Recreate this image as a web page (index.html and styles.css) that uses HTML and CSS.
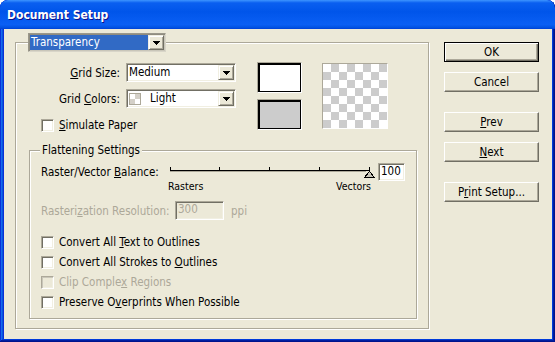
FILE: index.html
```html
<!DOCTYPE html>
<html lang="en">
<head>
  <meta charset="UTF-8">
  <title>Document Setup</title>
  <link rel="stylesheet" href="styles.css">
</head>
<body>
  <div class="window">
    <div class="titlebar">
      <span class="title">Document Setup</span>
    </div>
    <div class="client">
      <div class="panel">
        <div class="combo combo-legend">
          <span class="combo-value">Transparency</span>
          <span class="combo-btn"><svg width="7" height="4" viewBox="0 0 7 4"><polygon points="0,0 7,0 3.5,4" fill="#000"/></svg></span>
        </div>

        <div class="top">
          <div class="grid-form">
            <div class="field">
              <span class="field-label"><u>G</u>rid Size:</span>
              <div class="combo">
                <span class="combo-value">Medium</span>
                <span class="combo-btn"><svg width="7" height="4" viewBox="0 0 7 4"><polygon points="0,0 7,0 3.5,4" fill="#000"/></svg></span>
              </div>
            </div>
            <div class="field">
              <span class="field-label">Grid <u>C</u>olors:</span>
              <div class="combo">
                <span class="combo-value"><i class="grid-icon"></i>Light</span>
                <span class="combo-btn"><svg width="7" height="4" viewBox="0 0 7 4"><polygon points="0,0 7,0 3.5,4" fill="#000"/></svg></span>
              </div>
            </div>
            <div class="check check-paper"><span class="box"></span><span><u>S</u>imulate Paper</span></div>
          </div>
          <div class="swatches">
            <div class="swatch swatch-white"></div>
            <div class="swatch swatch-gray"></div>
          </div>
          <div class="checker"></div>
        </div>

        <div class="group">
          <div class="group-title">Flattening Settings</div>

          <div class="balance">
            <span class="balance-label">Raster/Vector <u>B</u>alance:</span>
            <svg class="slider" width="208" height="18" viewBox="0 0 208 18">
              <rect x="2" y="7" width="200" height="1" fill="#000"/>
              <rect x="2" y="8" width="196" height="1" fill="#ACA899"/>
              <rect x="2" y="4" width="1" height="3" fill="#000"/>
              <rect x="51" y="4" width="1" height="3" fill="#000"/>
              <rect x="101" y="4" width="1" height="3" fill="#000"/>
              <rect x="151" y="4" width="1" height="3" fill="#000"/>
              <rect x="201" y="4" width="1" height="3" fill="#000"/>
              <polygon points="201.5,8.5 196.5,14.5 206.5,14.5" fill="#C8C5B8" stroke="#000" stroke-width="1"/>
            </svg>
            <span class="input input-value">100</span>
          </div>
          <div class="scale">
            <span>Rasters</span>
            <span>Vectors</span>
          </div>

          <div class="res disabled">
            <span class="res-label">Rasteri<u>z</u>ation Resolution:</span>
            <span class="input input-disabled">300</span>
            <span class="res-unit">ppi</span>
          </div>

          <div class="checks">
            <div class="check"><span class="box"></span><span>Convert All <u>T</u>ext to Outlines</span></div>
            <div class="check"><span class="box"></span><span>Convert All Strokes to <u>O</u>utlines</span></div>
            <div class="check disabled"><span class="box"></span><span>Clip Comple<u>x</u> Regions</span></div>
            <div class="check"><span class="box"></span><span>Preserve O<u>v</u>erprints When Possible</span></div>
          </div>
        </div>
      </div>

      <div class="buttons">
        <button class="btn btn-default">OK</button>
        <button class="btn">Cancel</button>
        <button class="btn btn-space"><u>P</u>rev</button>
        <button class="btn"><u>N</u>ext</button>
        <button class="btn btn-space">P<u>r</u>int Setup...</button>
      </div>
    </div>
  </div>
</body>
</html>
```

FILE: styles.css
```css
body {
  margin: 0;
  background: #fff;
  font-family: "DejaVu Sans Condensed", "Liberation Sans", sans-serif;
  font-size: 11.5px;
  line-height: 14px;
  color: #000;
}

u {
  text-underline-offset: 1px;
}

.window {
  width: 555px;
  height: 342px;
  box-sizing: border-box;
  display: flex;
  flex-direction: column;
  background: #0831d9;
  border-radius: 8px 8px 0 0;
  box-shadow: inset -1px -1px #00138c, inset 1px 1px #0831d9, inset -2px -2px #001ea0, inset 2px 2px #166aee, inset -3px -3px #003bda, inset 3px 3px #0855dd;
  overflow: hidden;
}

.titlebar {
  height: 29px;
  flex-shrink: 0;
  background: linear-gradient(180deg, #3d95ff, #0a5ff0 10%, #0055ea 40%, #0a5ff4 85%, #0050e0 96%, #003dd7);
  border-radius: 8px 8px 0 0;
}

.title {
  display: block;
  padding-left: 7px;
  line-height: 30px;
  color: #fff;
  font-weight: bold;
  font-size: 12px;
  text-shadow: 1px 1px #0f1089;
}

.client {
  flex: 1;
  display: flex;
  align-items: flex-start;
  margin: 0 3px 3px 4px;
  padding: 13px 0 0 11px;
  background: #ece9d8;
}

/* etched group boxes */
.panel {
  width: 414px;
  height: 287px;
  box-sizing: border-box;
  border: 1px solid #aca899;
  box-shadow: 1px 1px 0 #fff, inset 1px 1px 0 #fff;
}

.combo {
  display: flex;
  height: 19px;
  box-sizing: border-box;
  padding: 1px;
  background: #fff;
  border: 1px solid;
  border-color: #aca899 #fff #fff #aca899;
  box-shadow: inset 1px 1px #716f64, inset -1px -1px #f1efe2;
}

.combo-value {
  flex: 1;
  display: flex;
  align-items: center;
  padding-left: 1px;
  line-height: 15px;
  white-space: nowrap;
}

.combo-btn {
  width: 16px;
  height: 15px;
  box-sizing: border-box;
  display: flex;
  align-items: center;
  justify-content: center;
  background: #ece9d8;
  border: 1px solid;
  border-color: #f1efe2 #716f64 #716f64 #f1efe2;
  box-shadow: inset 1px 1px #fff, inset -1px -1px #aca899;
}

.combo-btn svg {
  display: block;
  shape-rendering: crispEdges;
}

.combo-legend {
  width: 138px;
  margin: -10px 0 0 12px;
  background: #ece9d8;
  border-color: #9a978a #d8d5c8 #d8d5c8 #9a978a;
  box-shadow: inset 1px 1px #8f8c80, inset -1px -1px #c9c6b9;
}

.combo-legend .combo-value {
  background: #316ac5;
  color: #fff;
}

.top {
  display: flex;
  align-items: flex-start;
  margin-top: 10px;
}

.grid-form {
  width: 220px;
}

.field {
  display: flex;
  align-items: center;
  margin-top: 1px;
}

.field + .field {
  margin-top: 7px;
}

.field-label {
  width: 104px;
  margin-right: 6px;
  text-align: right;
  white-space: nowrap;
}

.field .combo {
  width: 110px;
}

.grid-icon {
  width: 12px;
  height: 12px;
  box-sizing: border-box;
  margin: 0 9px 0 0;
  border: 1px solid #aca899;
  background: repeating-conic-gradient(#d4d0c8 0 25%, #fff 0 50%) 0 0 / 10px 10px;
}

.check {
  display: flex;
  align-items: center;
  height: 20px;
  white-space: nowrap;
}

.box {
  width: 13px;
  height: 13px;
  box-sizing: border-box;
  margin-right: 5px;
  background: #fff;
  border: 1px solid;
  border-color: #aca899 #fff #fff #aca899;
  box-shadow: inset 1px 1px #716f64, inset -1px -1px #f1efe2;
}

.check-paper {
  height: 14px;
  margin: 10px 0 0 25px;
}

.swatches {
  display: flex;
  flex-direction: column;
  gap: 6px;
  margin-left: 21px;
}

.swatch {
  width: 45px;
  height: 31px;
  box-sizing: border-box;
  border: 1px solid;
  border-color: #aca899 #fff #fff #aca899;
  box-shadow: inset 0 0 0 1px #000, inset 1px 1px 0 1px #000;
}

.swatch-white {
  background: #fff;
}

.swatch-gray {
  background: #ccc;
}

.checker {
  width: 66px;
  height: 66px;
  box-sizing: border-box;
  margin: 1px 0 0 20px;
  border: 1px solid;
  border-color: #aca899 #fff #fff #aca899;
  background: repeating-conic-gradient(#ccc 0 25%, #fff 0 50%) 0 0 / 16px 16px;
}

.group {
  width: 388px;
  height: 169px;
  box-sizing: border-box;
  margin: 18px 0 0 13px;
  padding-left: 11px;
  border: 1px solid #aca899;
  box-shadow: 1px 1px 0 #fff, inset 1px 1px 0 #fff;
}

.group-title {
  width: fit-content;
  margin: -8px 0 0 -1px;
  padding: 0 2px;
  background: #ece9d8;
}

.balance {
  display: flex;
  align-items: center;
  height: 18px;
  margin-top: 6px;
}

.balance-label {
  width: 127px;
  white-space: nowrap;
}

.slider {
  display: block;
  shape-rendering: crispEdges;
}

.input {
  height: 18px;
  box-sizing: border-box;
  padding-left: 2px;
  line-height: 14px;
  border: 1px solid;
  border-color: #aca899 #fff #fff #aca899;
  box-shadow: inset 1px 1px #716f64, inset -1px -1px #f1efe2;
}

.input-value {
  width: 27px;
  margin-left: 2px;
  background: #fff;
}

.scale {
  display: flex;
  justify-content: space-between;
  width: 203px;
  margin: -1px 0 0 127px;
  font-size: 10.5px;
  line-height: 13px;
}

.res {
  display: flex;
  align-items: center;
  height: 19px;
  margin-top: 8px;
}

.res-label {
  width: 134px;
  white-space: nowrap;
}

.input-disabled {
  width: 49px;
  height: 19px;
  line-height: 15px;
  background: #ece9d8;
}

.res-unit {
  margin-left: 7px;
}

.disabled {
  color: #aca899;
}

.disabled .box {
  background: #ece9d8;
  box-shadow: inset 1px 1px #c9c6b9, inset -1px -1px #f1efe2;
}

.checks {
  margin-top: 12px;
}

.buttons {
  display: flex;
  flex-direction: column;
  gap: 10px;
  margin-left: 15px;
}

.btn {
  width: 95px;
  height: 20px;
  box-sizing: border-box;
  padding: 0;
  font: inherit;
  color: #000;
  background: #ece9d8;
  border: 1px solid;
  border-color: #fff #716f64 #716f64 #fff;
  box-shadow: inset -1px -1px #aca899;
}

.btn-default {
  border-color: #000;
  box-shadow: inset 1px 1px #fff, inset -1px -1px #716f64, inset -2px -2px #aca899;
}

.btn-space {
  margin-top: 10px;
}
```
